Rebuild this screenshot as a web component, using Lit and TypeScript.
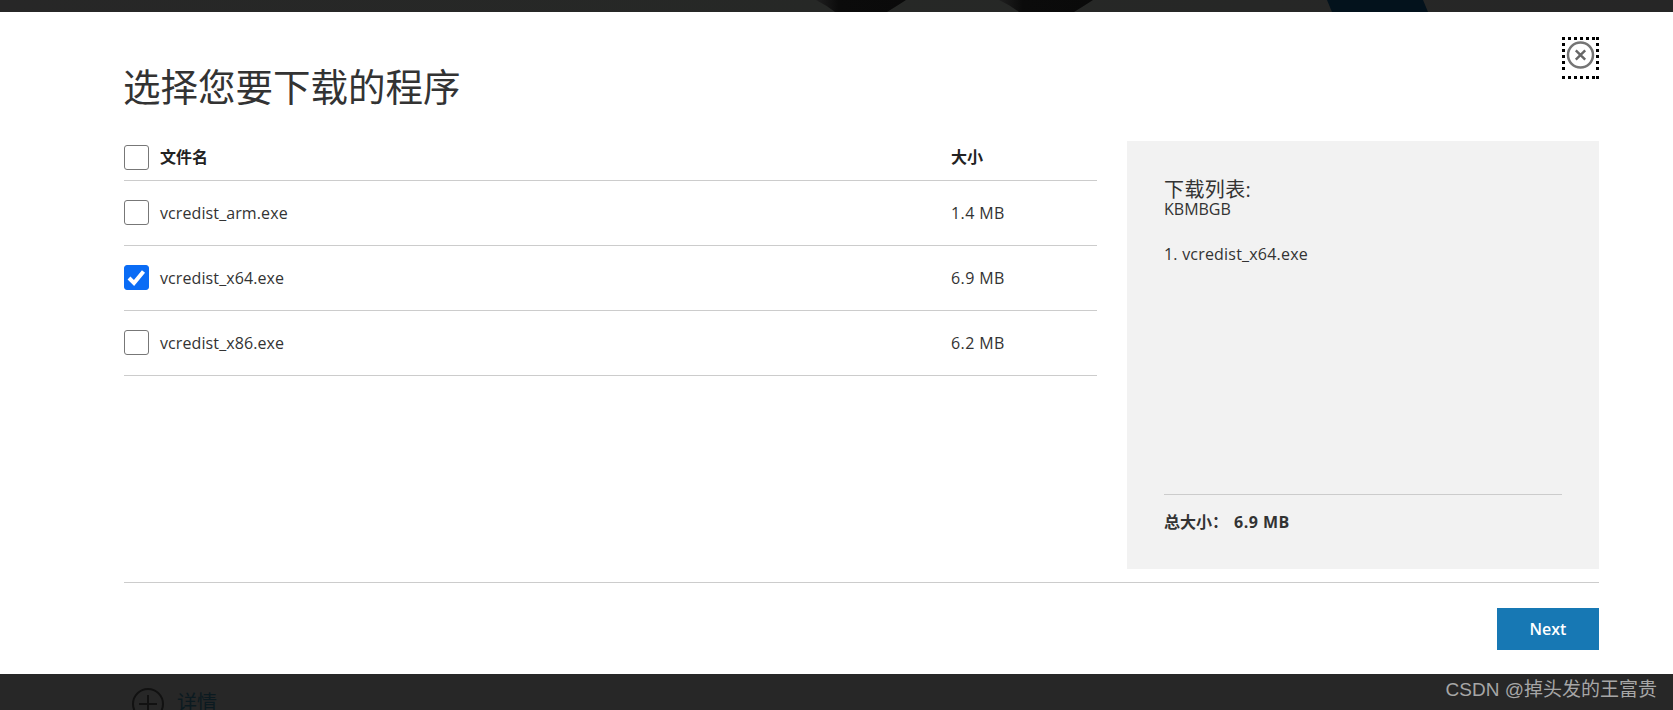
import { LitElement, html, css, svg } from 'lit';
import { customElement, state } from 'lit/decorators.js';
import { classMap } from 'lit/directives/class-map.js';

interface DownloadFile {
  name: string;
  size: string;
}

const FILES: DownloadFile[] = [
  { name: 'vcredist_arm.exe', size: '1.4 MB' },
  { name: 'vcredist_x64.exe', size: '6.9 MB' },
  { name: 'vcredist_x86.exe', size: '6.2 MB' },
];

// backdrop artwork that peeks out above the dialog
const bandArt = svg`
  <svg class="band-art" width="1673" height="12" viewBox="0 0 1673 12">
    <defs>
      <linearGradient id="band" x1="0" x2="1" y1="0" y2="0">
        <stop offset="0" stop-color="#272727" />
        <stop offset="0.5" stop-color="#262826" />
        <stop offset="1" stop-color="#262626" />
      </linearGradient>
      <linearGradient id="fold" x1="0" x2="1" y1="0" y2="0">
        <stop offset="0" stop-color="#1f1f1f" />
        <stop offset="0.25" stop-color="#0b0b0b" />
        <stop offset="1" stop-color="#0a0a0a" />
      </linearGradient>
    </defs>
    <rect width="1673" height="12" fill="url(#band)" />
    <path d="M816 0H906Q900 4 887 12H835Q826 5 816 0Z" fill="url(#fold)" />
    <path d="M999 0H1093Q1087 4 1074 12H1019Q1010 5 999 0Z" fill="url(#fold)" />
    <polygon points="1327,0 1423,0 1428,12 1332,12" fill="#03121c" />
  </svg>
`;

@customElement('app-root')
export class AppRoot extends LitElement {
  static styles = css`
    :host {
      display: block;
      height: 710px;
      overflow: hidden;
      background: #272727;
      font-family: 'Open Sans', 'Noto Sans CJK SC', sans-serif;
      color: #333;
    }

    .band {
      height: 12px;
      overflow: hidden;
    }

    .band-art {
      display: block;
    }

    .modal {
      box-sizing: border-box;
      height: 662px;
      padding: 0 74px 0 124px;
      background: #fff;
      display: flex;
      flex-direction: column;
    }

    .head {
      display: flex;
      justify-content: space-between;
      align-items: flex-start;
      height: 129px;
    }

    h1 {
      margin: 0 0 0 -1px;
      padding-top: 50px;
      font-size: 37.5px;
      line-height: 50px;
      font-weight: 400;
      color: #333;
    }

    .close {
      display: block;
      margin-top: 25px;
      padding: 0;
      border: 0;
      background: none;
      cursor: pointer;
    }

    .close svg {
      display: block;
    }

    .body {
      display: flex;
      justify-content: space-between;
      height: 428px;
    }

    .table {
      width: 973px;
    }

    .row {
      display: grid;
      grid-template-columns: 827px 1fr;
      align-items: center;
      height: 64px;
      border-bottom: 1px solid #ccc;
      font-size: 16px;
      letter-spacing: 0.1px;
    }

    .row.title {
      box-sizing: border-box;
      height: 40px;
      padding-top: 4px;
      align-items: start;
      font-weight: 700;
      line-height: 24px;
      letter-spacing: 0;
      color: #222;
    }

    .row.title .name {
      align-items: flex-start;
    }

    .name {
      display: flex;
      align-items: center;
      gap: 11px;
      cursor: pointer;
    }

    .size {
      letter-spacing: 0.4px;
    }

    .box {
      box-sizing: border-box;
      width: 25px;
      height: 25px;
      margin-bottom: 1px;
      border: 1px solid #777;
      border-radius: 3px;
      background: #fff;
      display: block;
      flex: none;
    }

    .box.on {
      border-color: #0a6cf5;
      background: #0a6cf5;
    }

    .box svg {
      display: block;
    }

    .panel {
      box-sizing: border-box;
      width: 472px;
      padding: 38px 37px 36px;
      background: #f2f2f2;
      display: flex;
      flex-direction: column;
    }

    .panel-title {
      font-size: 20px;
      line-height: 21px;
      letter-spacing: 0.4px;
    }

    .panel-sub {
      font-size: 16px;
      line-height: 18px;
    }

    .picked {
      flex: 1;
      margin: 0;
      padding: 25px 0 0;
      list-style: none;
      font-size: 16px;
      line-height: 22px;
      letter-spacing: 0.2px;
    }

    .total {
      box-sizing: border-box;
      display: flex;
      gap: 6px;
      padding-top: 16px;
      border-top: 1px solid #ccc;
      font-size: 16px;
      line-height: 22px;
      font-weight: 700;
      height: 39px;
    }

    .total-value {
      letter-spacing: 0.5px;
    }

    .foot {
      display: flex;
      justify-content: flex-end;
      margin-top: 13px;
      padding-top: 25px;
      border-top: 1px solid #ccc;
    }

    .next {
      width: 102px;
      height: 42px;
      border: 0;
      background: #1778b4;
      color: #fff;
      font: 600 16px 'Open Sans', sans-serif;
      cursor: pointer;
    }

    .page-foot {
      height: 36px;
      padding: 0 16px 0 132px;
      display: flex;
      justify-content: space-between;
      overflow: hidden;
    }

    .details {
      display: flex;
      gap: 13px;
      padding-top: 14px;
      font-size: 20px;
      line-height: 30px;
      color: #0b1a20;
    }

    .details svg {
      flex: none;
    }

    .mark {
      font-family: 'Liberation Sans', 'Noto Sans CJK SC', sans-serif;
      font-size: 19px;
      line-height: 32px;
      color: #a6a6a6;
    }
  `;

  @state()
  private selected = new Set<string>(['vcredist_x64.exe']);

  private toggle(name: string) {
    const next = new Set(this.selected);
    if (next.has(name)) next.delete(name);
    else next.add(name);
    this.selected = next;
  }

  private toggleAll() {
    this.selected = this.selected.size === FILES.length ? new Set() : new Set(FILES.map((f) => f.name));
  }

  private checkbox(on: boolean) {
    return html`
      <span class=${classMap({ box: true, on })}>
        ${on
          ? html`<svg width="23" height="23" viewBox="0 0 23 23">
              <path d="M4 12 9 17 18.5 5.5" fill="none" stroke="#fff" stroke-width="4" />
            </svg>`
          : ''}
      </span>
    `;
  }

  render() {
    const picked = FILES.filter((f) => this.selected.has(f.name));
    const total = picked.reduce((sum, f) => sum + parseFloat(f.size), 0);
    return html`
      <div class="band">${bandArt}</div>
      <div class="modal">
        <div class="head">
          <h1>选择您要下载的程序</h1>
          <button class="close" aria-label="关闭">
            <svg width="37" height="42" viewBox="0 0 37 42">
              <path
                d="M0 1.5H33M0 40.5H33M1.5 0V36M35.5 0V36"
                fill="none"
                stroke="#000"
                stroke-width="3"
                stroke-dasharray="3 3"
                shape-rendering="crispEdges"
              />
              <rect x="34" y="39" width="3" height="3" fill="#000" />
              <circle cx="18.5" cy="18" r="12.5" fill="none" stroke="#757575" stroke-width="2.5" />
              <path d="M13.8 13.3 23.2 22.7M23.2 13.3 13.8 22.7" fill="none" stroke="#666" stroke-width="2.4" />
            </svg>
          </button>
        </div>
        <div class="body">
          <div class="table">
            <div class="row title">
              <div class="name" @click=${this.toggleAll}>
                ${this.checkbox(this.selected.size === FILES.length)}
                <span>文件名</span>
              </div>
              <div>大小</div>
            </div>
            ${FILES.map(
              (f) => html`
                <div class="row">
                  <div class="name" @click=${() => this.toggle(f.name)}>
                    ${this.checkbox(this.selected.has(f.name))}
                    <span>${f.name}</span>
                  </div>
                  <div class="size">${f.size}</div>
                </div>
              `
            )}
          </div>
          <aside class="panel">
            <div class="panel-title">下载列表:</div>
            <div class="panel-sub">KBMBGB</div>
            <ol class="picked">
              ${picked.map((f, i) => html`<li>${i + 1}. ${f.name}</li>`)}
            </ol>
            <div class="total"><span>总大小：</span><span class="total-value">${total.toFixed(1)} MB</span></div>
          </aside>
        </div>
        <div class="foot"><button class="next">Next</button></div>
      </div>
      <div class="page-foot">
        <div class="details">
          <svg width="32" height="32" viewBox="0 0 32 32">
            <circle cx="16" cy="16" r="15" fill="none" stroke="#111" stroke-width="2" />
            <path d="M7 16H25M16 7V25" fill="none" stroke="#111" stroke-width="2" />
          </svg>
          <span>详情</span>
        </div>
        <div class="mark">CSDN @掉头发的王富贵</div>
      </div>
    `;
  }
}
